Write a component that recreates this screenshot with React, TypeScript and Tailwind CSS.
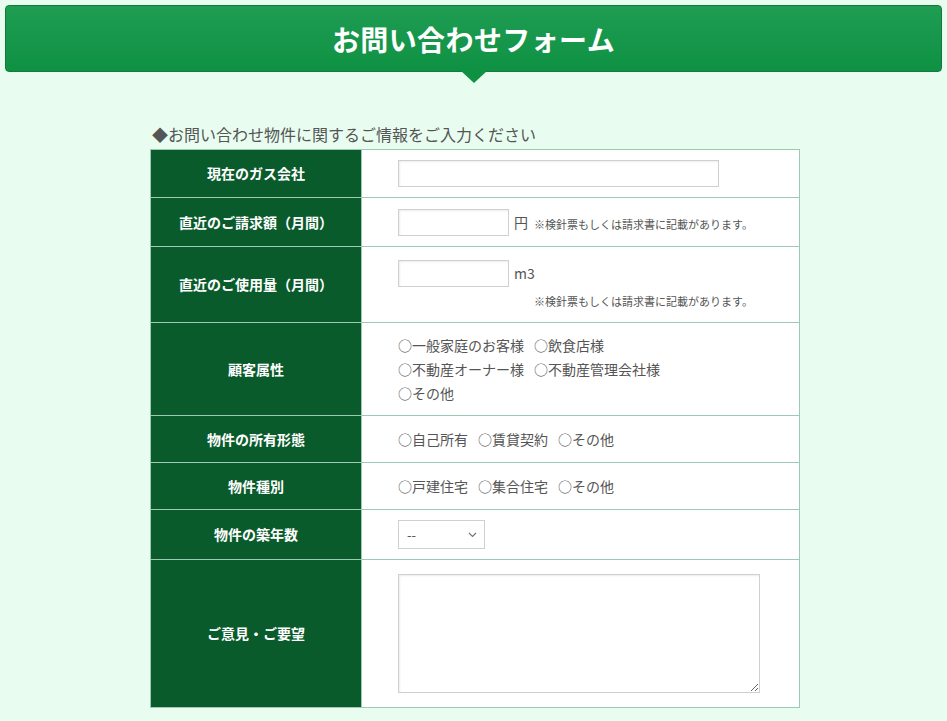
import React from 'react';

const jp = { fontFamily: '"Noto Sans CJK JP", "Noto Sans", sans-serif' };

const Note = () => (
  <span className="text-[11px] text-[#555]">※検針票もしくは請求書に記載があります。</span>
);

const Radios = ({ items }: { items: string[] }) => (
  <div className="flex flex-wrap gap-x-[10px] text-[14px] leading-[24px] text-[#555]">
    {items.map((t) => (
      <label key={t} className="whitespace-nowrap">
        ○{t}
      </label>
    ))}
  </div>
);

function Row({ label, h, children }: { label: string; h: number; children: React.ReactNode }) {
  return (
    <tr style={{ height: h }}>
      <th className="w-[211px] bg-[#0a5b2c] border border-[#9ccab5] text-center text-[14px] font-bold text-white">
        {label}
      </th>
      <td className="bg-white border border-[#9ccab5] pl-[36px] pr-4 align-middle">{children}</td>
    </tr>
  );
}

const inputCls =
  'h-[27px] border border-[#d0d0d0] bg-white shadow-[inset_1px_1px_2px_rgba(0,0,0,0.08)] outline-none';

export default function App() {
  return (
    <div className="min-h-[721px] bg-[#e8fdf0] pt-[5px]" style={jp}>
      <div className="relative mx-[5px] h-[67px] rounded-[4px] border border-[#137a3e] bg-gradient-to-b from-[#1e9d53] to-[#0e9143] flex items-center justify-center">
        <h1 className="text-[28px] font-bold text-white tracking-[0.4px]">お問い合わせフォーム</h1>
        <div className="absolute left-1/2 -translate-x-1/2 top-full w-0 h-0 border-l-[13px] border-r-[13px] border-t-[12px] border-l-transparent border-r-transparent border-t-[#0e9143]" />
      </div>

      <div className="w-[650px] ml-[150px] mt-[50px]">
        <p className="pl-[2px] text-[16px] leading-[24px] text-[#555] mb-[3px]">◆お問い合わせ物件に関するご情報をご入力ください</p>
        <table className="w-full border-collapse">
          <tbody>
            <Row label="現在のガス会社" h={48}>
              <input className={`${inputCls} w-[321px] block`} />
            </Row>
            <Row label="直近のご請求額（月間）" h={49}>
              <div className="flex items-center">
                <input className={`${inputCls} w-[111px]`} />
                <span className="ml-[5px] text-[14px] text-[#555]">円</span>
                <span className="ml-[6px]">
                  <Note />
                </span>
              </div>
            </Row>
            <Row label="直近のご使用量（月間）" h={76}>
              <div className="flex items-center">
                <input className={`${inputCls} w-[111px]`} />
                <span className="ml-[5px] text-[14px] text-[#555]">m3</span>
              </div>
              <div className="pl-[136px] mt-[3px] leading-[18px]">
                <Note />
              </div>
            </Row>
            <Row label="顧客属性" h={93}>
              <div className="w-[280px]">
                <Radios items={['一般家庭のお客様', '飲食店様', '不動産オーナー様', '不動産管理会社様', 'その他']} />
              </div>
            </Row>
            <Row label="物件の所有形態" h={47}>
              <Radios items={['自己所有', '賃貸契約', 'その他']} />
            </Row>
            <Row label="物件種別" h={47}>
              <Radios items={['戸建住宅', '集合住宅', 'その他']} />
            </Row>
            <Row label="物件の築年数" h={50}>
              <div className="relative w-[87px] h-[29px] border border-[#d0d0d0] bg-white flex items-center px-[8px] text-[13px] text-[#555]">
                --
                <svg className="absolute right-[7px] top-[11px]" width="9" height="6" viewBox="0 0 9 6">
                  <path d="M1 1l3.5 3.5L8 1" stroke="#777" strokeWidth="1.2" fill="none" />
                </svg>
              </div>
            </Row>
            <Row label="ご意見・ご要望" h={148}>
              <textarea className="block w-[362px] h-[119px] border border-[#d0d0d0] bg-white shadow-[inset_1px_1px_2px_rgba(0,0,0,0.08)] outline-none" />
            </Row>
          </tbody>
        </table>
      </div>
    </div>
  );
}
